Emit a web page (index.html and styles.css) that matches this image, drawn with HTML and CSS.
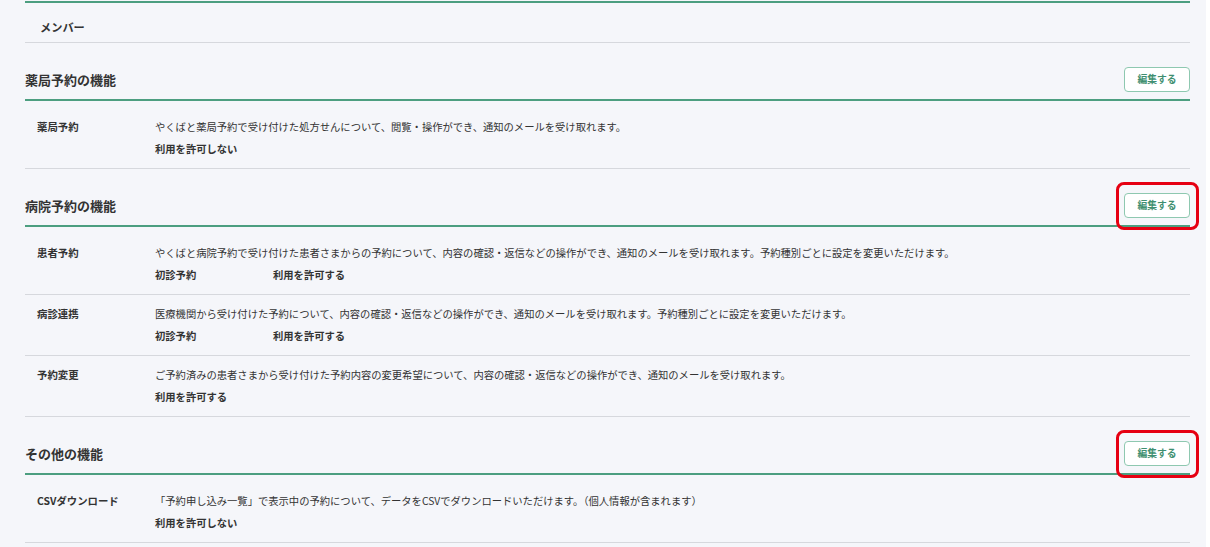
FILE: index.html
```html
<!DOCTYPE html>
<html lang="ja">
<head>
<meta charset="utf-8">
<title>機能設定</title>
<link rel="stylesheet" href="styles.css">
</head>
<body>
<div class="page">
  <main class="content">
    <div class="member-row">メンバー</div>

    <section class="section">
      <div class="section-head">
        <h2 class="section-title">薬局予約の機能</h2>
        <div class="btn-wrap"><button class="edit-btn">編集する</button></div>
      </div>
      <div class="rows">
        <div class="row">
          <div class="row-label">薬局予約</div>
          <div class="row-body">
            <p class="row-desc">やくばと薬局予約で受け付けた処方せんについて、閲覧・操作ができ、通知のメールを受け取れます。</p>
            <div class="row-value">利用を許可しない</div>
          </div>
        </div>
      </div>
    </section>

    <section class="section">
      <div class="section-head">
        <h2 class="section-title">病院予約の機能</h2>
        <div class="btn-wrap marked"><button class="edit-btn">編集する</button></div>
      </div>
      <div class="rows">
        <div class="row">
          <div class="row-label">患者予約</div>
          <div class="row-body">
            <p class="row-desc">やくばと病院予約で受け付けた患者さまからの予約について、内容の確認・返信などの操作ができ、通知のメールを受け取れます。予約種別ごとに設定を変更いただけます。</p>
            <div class="row-value sub"><span class="sub-label">初診予約</span><span>利用を許可する</span></div>
          </div>
        </div>
        <div class="row">
          <div class="row-label">病診連携</div>
          <div class="row-body">
            <p class="row-desc">医療機関から受け付けた予約について、内容の確認・返信などの操作ができ、通知のメールを受け取れます。予約種別ごとに設定を変更いただけます。</p>
            <div class="row-value sub"><span class="sub-label">初診予約</span><span>利用を許可する</span></div>
          </div>
        </div>
        <div class="row">
          <div class="row-label">予約変更</div>
          <div class="row-body">
            <p class="row-desc">ご予約済みの患者さまから受け付けた予約内容の変更希望について、内容の確認・返信などの操作ができ、通知のメールを受け取れます。</p>
            <div class="row-value">利用を許可する</div>
          </div>
        </div>
      </div>
    </section>

    <section class="section">
      <div class="section-head">
        <h2 class="section-title">その他の機能</h2>
        <div class="btn-wrap marked"><button class="edit-btn">編集する</button></div>
      </div>
      <div class="rows">
        <div class="row">
          <div class="row-label">CSVダウンロード</div>
          <div class="row-body">
            <p class="row-desc">「予約申し込み一覧」で表示中の予約について、データをCSVでダウンロードいただけます。（個人情報が含まれます）</p>
            <div class="row-value">利用を許可しない</div>
          </div>
        </div>
      </div>
    </section>
  </main>
  <div class="edge"></div>
</div>
</body>
</html>
```

FILE: styles.css
```css
* { box-sizing: border-box; }

html, body {
  margin: 0;
  padding: 0;
  background: #f5f6fa;
  font-family: "Noto Sans CJK JP", "Noto Sans", sans-serif;
  color: #333333;
}

.page {
  display: flex;
  width: 1210px;
  min-height: 547px;
  overflow: hidden;
}

.content {
  width: 1165px;
  margin-left: 25px;
  margin-top: 1px;
  border-top: 2px solid #4c9e80;
}

.edge {
  margin-left: auto;
  width: 4px;
  background: #ffffff;
}

.member-row {
  padding: 16px 0 7px 15px;
  font-size: 11.2px;
  line-height: 16px;
  font-weight: 700;
  border-bottom: 1px solid #d6d8dd;
}

.section-head {
  display: flex;
  align-items: center;
  justify-content: space-between;
  padding: 24px 0 7px 0;
  border-bottom: 2px solid #4c9e80;
}

.section-title {
  margin: 0;
  font-size: 13px;
  line-height: 23px;
  font-weight: 700;
}

.btn-wrap {
  position: relative;
  display: flex;
}

.btn-wrap.marked::after {
  content: "";
  position: absolute;
  top: -11px;
  bottom: -12px;
  left: -8px;
  right: -9px;
  border: 3px solid #e60012;
  border-radius: 8px;
  pointer-events: none;
}

.edit-btn {
  width: 66px;
  height: 25px;
  padding: 0;
  background: #ffffff;
  border: 1px solid #8ec8b0;
  border-radius: 4px;
  color: #3f8f71;
  font-family: inherit;
  font-size: 9.8px;
  font-weight: 700;
  line-height: 23px;
}

.rows {
  padding-top: 7px;
}

.row {
  display: flex;
  padding: 11px 0 11px 12px;
  border-bottom: 1px solid #d6d8dd;
}

.row-label {
  width: 118px;
  flex: none;
  font-size: 10.4px;
  line-height: 16px;
  font-weight: 700;
}

.row-body {
  display: flex;
  flex-direction: column;
  gap: 6px;
}

.row-desc {
  margin: 0;
  font-size: 10.3px;
  line-height: 16px;
}

.row-value {
  font-size: 10.3px;
  line-height: 16px;
  font-weight: 700;
}

.row-value.sub {
  display: flex;
}

.sub-label {
  width: 118px;
  flex: none;
}
```
